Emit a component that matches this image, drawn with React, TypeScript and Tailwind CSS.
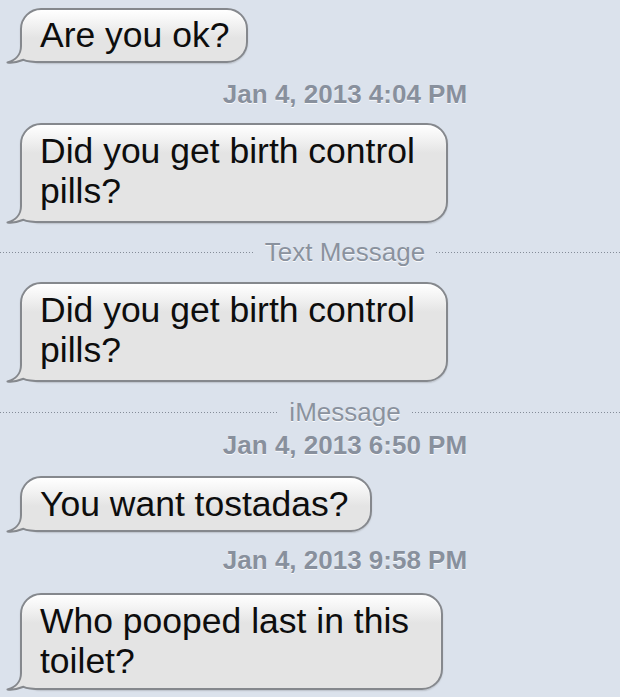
import React from "react";

const FONT = "font-['Liberation_Sans',Arial,Helvetica,sans-serif]";

function Tail() {
  return (
    <svg
      className="absolute left-[-18px] bottom-[-3px]"
      width="44"
      height="24"
      viewBox="0 0 44 24"
    >
      <path
        d="M17 0 L17 6 C17 15 11 20.5 3.5 22.5 C9 23.2 14 22 19.5 19.8 C23 21.6 28 22 38 22 L44 22 L44 0 Z"
        fill="#e4e4e4"
      />
      <path
        d="M17 0 L17 6 C17 15 11 20.5 3.5 22.5 C9 23.2 14 22 19.5 19.8 C23 21.6 28 22 38 22 L44 22"
        fill="none"
        stroke="#85888d"
        strokeWidth="2"
        strokeLinejoin="round"
      />
    </svg>
  );
}

function Bubble({ className, children }: { className: string; children: React.ReactNode }) {
  return (
    <div
      className={
        "relative ml-[20px] rounded-[21px] border-2 border-[#85888d] bg-[linear-gradient(#ffffff_0px,#f4f4f4_12px,#e4e4e4_28px)] shadow-[0_1px_1.5px_rgba(0,0,0,0.15),inset_0_1px_1px_#ffffff] pl-[18px] text-[35.5px] leading-[40px] text-[#0d0d0d] whitespace-nowrap " +
        className
      }
    >
      <Tail />
      <div className="relative">{children}</div>
    </div>
  );
}

function Stamp({ className, children }: { className: string; children: React.ReactNode }) {
  return (
    <div
      className={
        "text-center text-[26px] leading-[30px] font-bold text-[#88909d] [text-shadow:0_1px_0_rgba(255,255,255,0.85)] " +
        className
      }
    >
      {children}
    </div>
  );
}

function Divider({ className, children }: { className: string; children: React.ReactNode }) {
  return (
    <div className={"flex items-center h-[30px] " + className}>
      <div className="flex-1 h-px bg-[linear-gradient(to_right,#848c98_1px,transparent_1px)] bg-[length:3px_1px]" />
      <span className="px-[11px] text-[26px] leading-[30px] text-[#8a929e] [text-shadow:0_1px_0_rgba(255,255,255,0.85)]">
        {children}
      </span>
      <div className="flex-1 h-px bg-[linear-gradient(to_right,#848c98_1px,transparent_1px)] bg-[length:3px_1px]" />
    </div>
  );
}

export default function App() {
  return (
    <div className={"w-[620px] h-[697px] overflow-hidden bg-[#dbe2ec] " + FONT}>
      <div className="w-[690px] pt-[8px] flex flex-col">
        <Bubble className="w-[228px] pt-[5px] pb-[6px]">Are you ok?</Bubble>

        <Stamp className="mt-[16px]">Jan 4, 2013 4:04 PM</Stamp>

        <Bubble className="mt-[14px] w-[428px] pt-[6px] pb-[10px]">
          Did you get birth control
          <br />
          pills?
        </Bubble>

        <Divider className="mt-[14px]">Text Message</Divider>

        <Bubble className="mt-[15px] w-[428px] pt-[6px] pb-[10px]">
          Did you get birth control
          <br />
          pills?
        </Bubble>

        <Divider className="mt-[15px]">iMessage</Divider>

        <Stamp className="mt-[3px]">Jan 4, 2013 6:50 PM</Stamp>

        <Bubble className="mt-[16px] w-[352px] pt-[6px] pb-[6px]">You want tostadas?</Bubble>

        <Stamp className="mt-[13px]">Jan 4, 2013 9:58 PM</Stamp>

        <Bubble className="mt-[18px] w-[423px] pt-[6px] pb-[7px]">
          Who pooped last in this
          <br />
          toilet?
        </Bubble>
      </div>
    </div>
  );
}
